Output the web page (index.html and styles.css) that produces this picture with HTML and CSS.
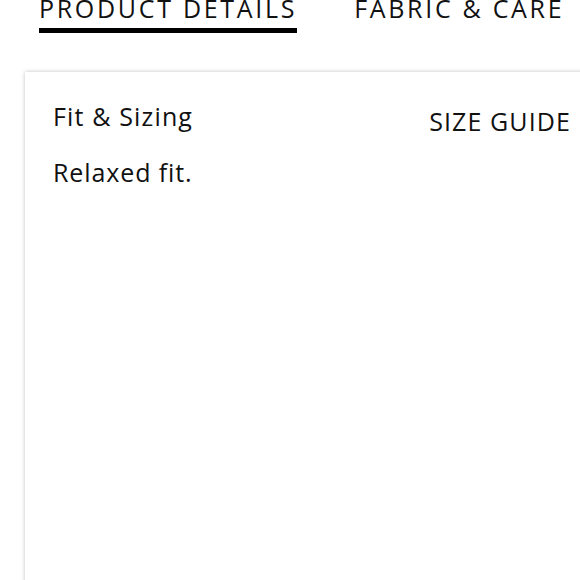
FILE: index.html
```html
<!DOCTYPE html>
<html lang="en">
<head>
<meta charset="utf-8">
<title>Product details</title>
<link rel="stylesheet" href="styles.css">
</head>
<body>
<div class="page">
  <nav class="tabs">
    <div class="tab active">PRODUCT DETAILS</div>
    <div class="tab">FABRIC &amp; CARE</div>
  </nav>
  <section class="card">
    <div class="card-head">
      <h2 class="title">Fit &amp; Sizing</h2>
      <a class="guide">SIZE GUIDE</a>
    </div>
    <p class="desc">Relaxed fit.</p>
  </section>
</div>
</body>
</html>
```

FILE: styles.css
```css
html, body {
  margin: 0;
  padding: 0;
  background: #fff;
  overflow: hidden;
  height: 580px;
}
.page {
  font-family: "Open Sans", "Liberation Sans", sans-serif;
  color: #111;
  width: 580px;
  height: 580px;
  overflow: hidden;
}
.tabs {
  display: flex;
  gap: 57px;
  padding-left: 39px;
  margin-top: -4px;
}
.tab {
  font-size: 25px;
  line-height: 24px;
  letter-spacing: 2.7px;
  padding-bottom: 8px;
  border-bottom: 5px solid transparent;
  white-space: nowrap;
}
.tab.active {
  border-bottom-color: #000;
}
.card {
  margin-top: 39px;
  margin-left: 25px;
  width: 574px;
  height: 560px;
  box-sizing: border-box;
  padding: 29px 28px 0 28px;
  box-shadow: 0 0 4px rgba(0,0,0,0.25);
  background: #fff;
}
.card-head {
  display: flex;
  justify-content: space-between;
  align-items: flex-start;
}
.title {
  margin: 0;
  font-weight: normal;
  font-size: 25px;
  line-height: 30px;
  letter-spacing: 1.15px;
}
.guide {
  padding-top: 8px;
  font-size: 25px;
  line-height: 24px;
  letter-spacing: 1.1px;
}
.desc {
  margin: 24px 0 0 0;
  font-size: 25px;
  line-height: 30px;
  letter-spacing: 0.9px;
}
```
